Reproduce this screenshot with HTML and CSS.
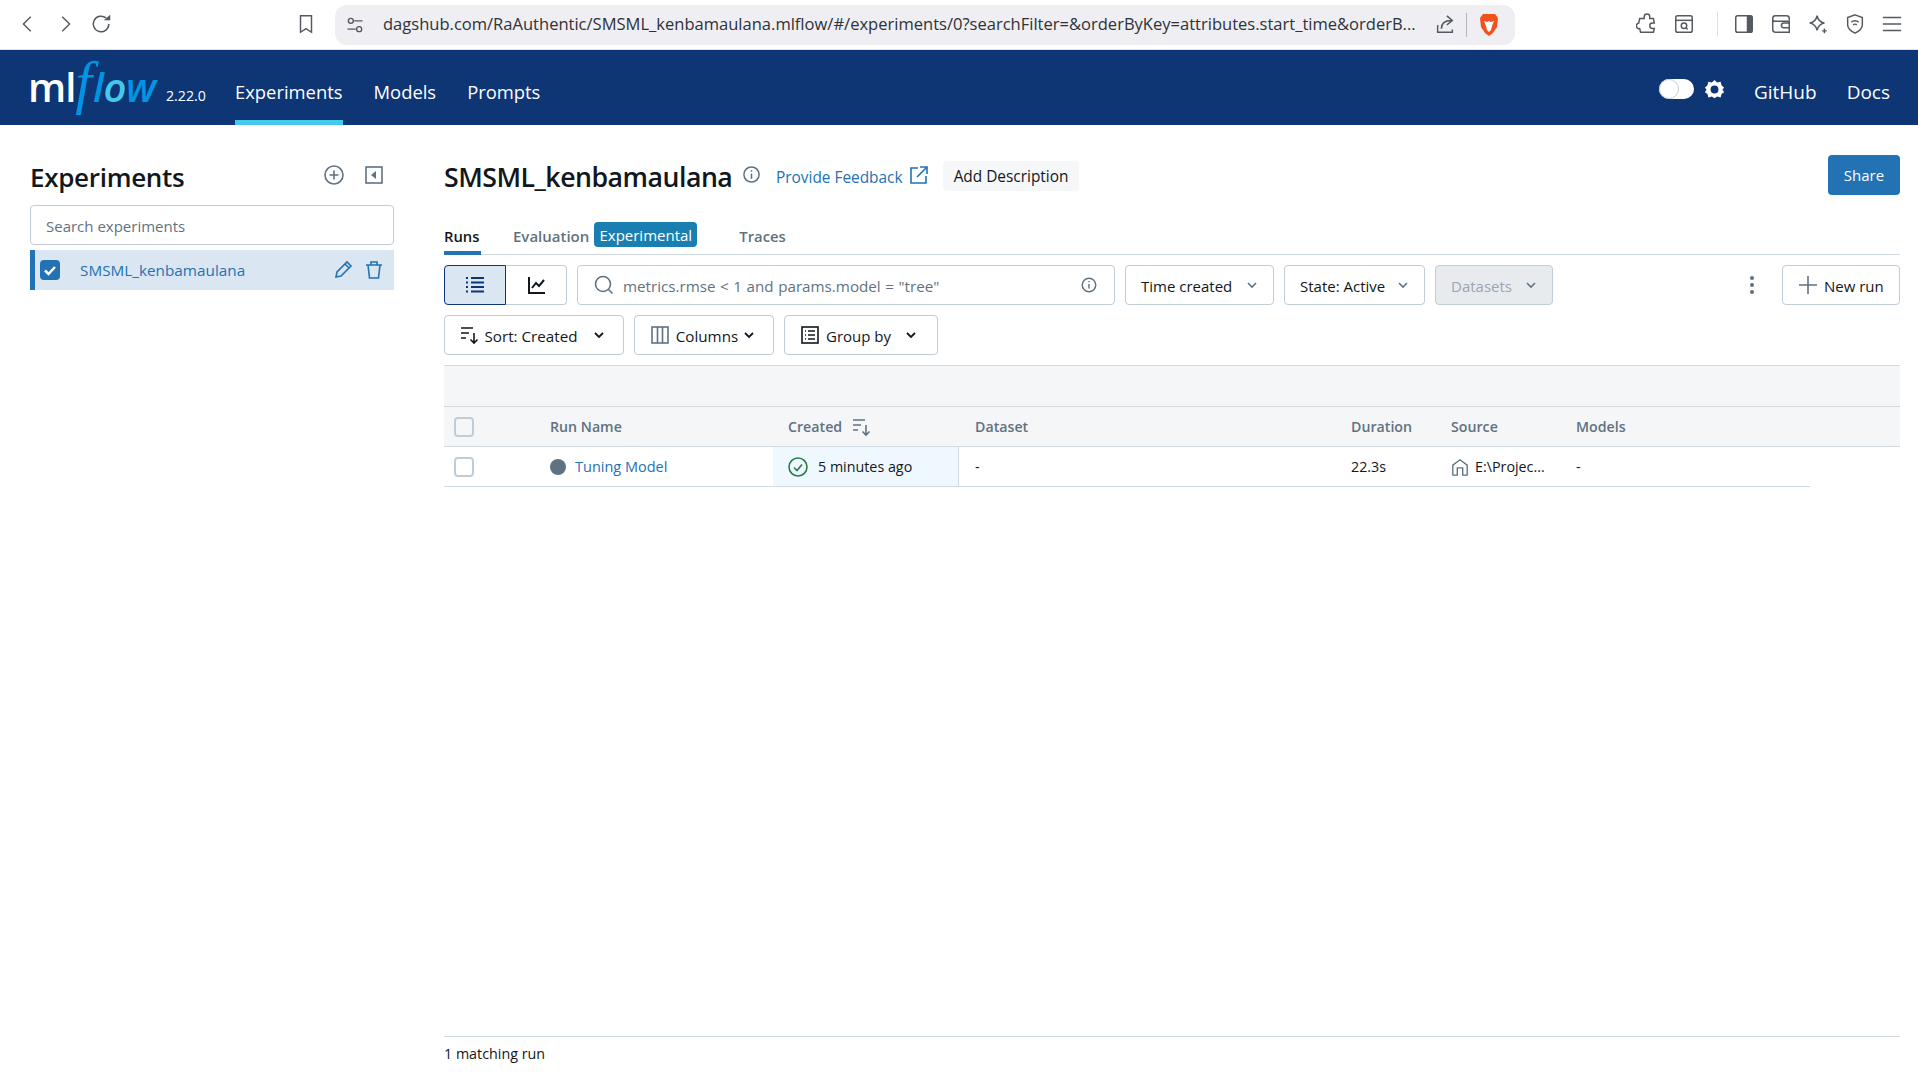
FILE: index.html
```html
<!DOCTYPE html>
<html lang="en">
<head>
  <meta charset="UTF-8" />
  <title>MLflow Experiments</title>
  <link rel="stylesheet" href="styles.css">
</head>
<body>

<div class="browser-bar">
  <div class="browser-nav">
    <svg class="b-icon" viewBox="0 0 24 24"><path d="M15 4l-8 8 8 8"/></svg>
    <svg class="b-icon" viewBox="0 0 24 24"><path d="M9 4l8 8-8 8"/></svg>
    <svg class="b-icon" viewBox="0 0 24 24"><path d="M19.5 12a8.5 8.5 0 1 1-3-6.5"/><path class="solid" d="M14 8h7V2z"/></svg>
  </div>
  <svg class="b-icon bookmark" viewBox="0 0 24 24"><path d="M6 3h12v18l-6-4-6 4z"/></svg>
  <div class="address">
    <svg class="b-icon tune" viewBox="0 0 24 24"><circle cx="7" cy="7" r="3"/><path d="M11 7h10M3 17h10"/><circle cx="17" cy="17" r="3"/></svg>
    <span class="url">dagshub.com/RaAuthentic/SMSML_kenbamaulana.mlflow/#/experiments/0?searchFilter=&amp;orderByKey=attributes.start_time&amp;orderB...</span>
    <svg class="b-icon share-ic" viewBox="0 0 24 24"><path d="M4 12v8h16v-3M8 16c0-6 4-9 11-9M14 2l6 5-6 5"/></svg>
    <span class="b-sep"></span>
    <svg class="brave" viewBox="0 0 24 24"><path d="M6 1h12l3 4-1 9-4 6-4 3-4-3-4-6-1-9z" fill="#f1511b"/><path d="M7 8l3 1 2-1 2 1 3-1-2 5-1 4-2 2-2-2-1-4z" fill="#fff"/></svg>
  </div>
  <div class="ext-icons">
    <svg class="b-icon" viewBox="0 0 24 24"><path d="M9 4a3 3 0 0 1 6 0v2h4l1 5h-2a3 3 0 0 0 0 6h2l-1 4H5l-1-4a3 3 0 0 1-1-6l1-5h5z"/></svg>
    <svg class="b-icon" viewBox="0 0 24 24"><rect x="3" y="3" width="18" height="18" rx="2"/><path d="M3 8h18"/><circle cx="12" cy="14" r="3"/><path d="M14 16l2 2"/></svg>
    <span class="b-sep light"></span>
    <svg class="b-icon" viewBox="0 0 24 24"><rect x="3" y="3" width="18" height="18" rx="2"/><path class="solid" d="M15 3h6v18h-6z"/></svg>
    <svg class="b-icon" viewBox="0 0 24 24"><path d="M21 8V6a3 3 0 0 0-3-3H6a3 3 0 0 0-3 3v12a3 3 0 0 0 3 3h15v-5M3 7c0 1 1 2 3 2h15v3"/><path d="M21 11h-6a2 2 0 0 0 0 5h6z"/></svg>
    <svg class="b-icon" viewBox="0 0 24 24"><path d="M11 3c1 5 3 7 8 8-5 1-7 3-8 8-1-5-3-7-8-8 5-1 7-3 8-8z"/><path d="M19 17v5M16.5 19.500h5"/></svg>
    <svg class="b-icon" viewBox="0 0 24 24"><path d="M12 2l8 3v8c0 4-4 7-8 9-4-2-8-5-8-9V5z"/><path d="M8 10c2-2 6-2 8 0M10 13c1-1 3-1 4 0"/></svg>
    <svg class="b-icon" viewBox="0 0 24 24"><path d="M2 5h20M2 12h20M2 19h20"/></svg>
  </div>
</div>

<header class="topnav">
  <div class="logo"><span class="logo-ml">ml</span><span class="logo-f">f</span><span class="logo-flow">l<span class="logo-o">o</span>w</span></div>
  <span class="version">2.22.0</span>
  <nav class="nav-links">
    <a class="active">Experiments</a>
    <a>Models</a>
    <a>Prompts</a>
  </nav>
  <div class="nav-right">
    <span class="toggle"><span class="knob"></span></span>
    <svg class="gear" viewBox="0 0 24 24"><path d="M12 1l3 3 4-1 1 4 3 3-2 2 2 3-3 2-1 4-4-1-3 2-3-2-4 1-1-4-3-2 2-3-2-2 3-3 1-4 4 1z" fill="#fff"/><circle cx="12" cy="12" r="4.500" fill="#0e3574"/></svg>
    <a class="github">GitHub</a>
    <a class="docs">Docs</a>
  </div>
</header>

<div class="page">
  <aside class="sidebar">
    <div class="side-head">
      <h2>Experiments</h2>
      <svg class="ic side-ic" viewBox="0 0 20 20"><circle cx="10" cy="10" r="9"/><path d="M10 5.500v9M5.500 10h9"/></svg>
      <svg class="ic side-ic" viewBox="0 0 20 20"><rect x="2" y="2" width="16" height="16"/><path class="solid" d="M12 6v8l-5-4z"/></svg>
    </div>
    <div class="side-search">Search experiments</div>
    <div class="exp-row">
      <span class="check-on"><svg viewBox="0 0 20 20"><path d="M5 10.500l3.500 3.500L15 7"/></svg></span>
      <span class="exp-name">SMSML_kenbamaulana</span>
      <svg class="ic blue-ic" viewBox="0 0 20 20"><path d="M3 17l1-5L14 2l4 4L8 16zM12 4l4 4"/></svg>
      <svg class="ic blue-ic" viewBox="0 0 20 20"><path d="M2 5h16M7 5V2h6v3M4 5l1.500 13h9L16 5"/></svg>
    </div>
  </aside>

  <main class="main">
    <div class="title-row">
      <h1>SMSML_kenbamaulana</h1>
      <svg class="ic info" viewBox="0 0 20 20"><circle cx="10" cy="10" r="8"/><path d="M10 9v5.500M10 5.500v1.500"/></svg>
      <a class="feedback">Provide Feedback</a>
      <svg class="ic ext-link" viewBox="0 0 20 20"><path d="M9 3H2v15h15v-7M11 2h7v7M18 2L8 12"/></svg>
      <button class="add-desc">Add Description</button>
      <button class="share">Share</button>
    </div>

    <div class="tabs">
      <span class="tab active">Runs</span>
      <span class="tab eval">Evaluation</span>
      <span class="badge">Experimental</span>
      <span class="tab traces">Traces</span>
    </div>

    <div class="toolbar">
      <div class="segmented">
        <span class="seg on">
          <svg class="ic dark-ic" viewBox="0 0 22 20"><path d="M2 3h2M7 3h13M2 7.500h2M7 7.500h13M2 12h2M7 12h13M2 16.500h2M7 16.500h13"/></svg>
        </span>
        <span class="seg">
          <svg class="ic dark-ic" viewBox="0 0 20 20"><path d="M2 2v16h16M5 13l4-5 3 3 5-6"/></svg>
        </span>
      </div>
      <div class="search-box">
        <svg class="ic grey-ic" viewBox="0 0 20 20"><circle cx="9" cy="9" r="7.500"/><path d="M14.500 14.500l4 4"/></svg>
        <span class="placeholder">metrics.rmse &lt; 1 and params.model = "tree"</span>
        <svg class="ic grey-ic info-sm" viewBox="0 0 20 20"><circle cx="10" cy="10" r="7.500"/><path d="M10 9v5M10 5.500v1.500"/></svg>
      </div>
      <button class="btn w-time"><span>Time created</span> <svg class="chev" viewBox="0 0 12 12"><path d="M2 4l4 4 4-4"/></svg></button>
      <button class="btn w-state"><span>State: Active</span> <svg class="chev" viewBox="0 0 12 12"><path d="M2 4l4 4 4-4"/></svg></button>
      <button class="btn w-data disabled"><span>Datasets</span> <svg class="chev" viewBox="0 0 12 12"><path d="M2 4l4 4 4-4"/></svg></button>
      <svg class="kebab" viewBox="0 0 4 20"><circle cx="2" cy="3" r="2"/><circle cx="2" cy="10" r="2"/><circle cx="2" cy="17" r="2"/></svg>
      <button class="btn w-new"><svg class="ic plus" viewBox="0 0 20 20"><path d="M10 1v18M1 10h18"/></svg><span>New run</span></button>
    </div>

    <div class="toolbar second">
      <button class="btn w-sort">
        <svg class="ic dark-ic" viewBox="0 0 20 20"><path d="M1 3h12M1 8h8M1 13h5M14 8v10M10.500 14.500l3.500 3.500 3.500-3.500"/></svg>
        <span>Sort: Created</span>
        <svg class="chev dark" viewBox="0 0 12 12"><path d="M2 4l4 4 4-4"/></svg>
      </button>
      <button class="btn w-cols">
        <svg class="ic grey-ic" viewBox="0 0 20 20"><rect x="2" y="2" width="16" height="16"/><path d="M7.500 2v16M12.500 2v16"/></svg>
        <span>Columns</span>
        <svg class="chev dark" viewBox="0 0 12 12"><path d="M2 4l4 4 4-4"/></svg>
      </button>
      <button class="btn w-group">
        <svg class="ic dark-ic" viewBox="0 0 20 20"><rect x="2" y="2" width="16" height="16"/><path d="M5 6h1M8 6h7M5 10h1M8 10h7M5 14h1M8 14h7"/></svg>
        <span>Group by</span>
        <svg class="chev dark" viewBox="0 0 12 12"><path d="M2 4l4 4 4-4"/></svg>
      </button>
    </div>

    <div class="band"></div>

    <div class="grid-row head">
      <span class="cell"><span class="checkbox"></span></span>
      <span class="cell">Run Name</span>
      <span class="cell">Created
        <svg class="ic sort-ic" viewBox="0 0 20 20"><path d="M1 3h12M1 8h8M1 13h5M14 8v10M10.500 14.500l3.500 3.500 3.500-3.500"/></svg>
      </span>
      <span class="cell">Dataset</span>
      <span class="cell">Duration</span>
      <span class="cell">Source</span>
      <span class="cell">Models</span>
    </div>
    <div class="grid-row run">
      <span class="cell"><span class="checkbox white"></span></span>
      <span class="cell"><span class="dot"></span><a class="run-link">Tuning Model</a></span>
      <span class="cell created">
        <svg class="ic ok" viewBox="0 0 20 20"><circle cx="10" cy="10" r="9"/><path d="M6 10.500l3 3 5-6"/></svg>
        5 minutes ago
      </span>
      <span class="cell">-</span>
      <span class="cell">22.3s</span>
      <span class="cell source">
        <svg class="ic grey-ic home" viewBox="0 0 20 20"><path d="M2 19V8l8-6 8 6v11h-5v-8H7v8z"/></svg>
        E:\Projec...
      </span>
      <span class="cell">-</span>
    </div>

    <div class="matching">1 matching run</div>
  </main>
</div>

</body>
</html>
```

FILE: styles.css
```css
* {
  box-sizing: border-box;
}
html, body {
  height: 100%;
}
body {
  margin: 0;
  font-family: "Open Sans", "Noto Sans", sans-serif;
  font-size: 15px;
  color: #11171c;
  background: white;
  display: flex;
  flex-direction: column;
  overflow: hidden;
}
button {
  font: inherit;
  color: inherit;
}
svg {
  flex: none;
}

/* browser chrome */
.browser-bar {
  height: 50px;
  border-bottom: 1px solid #dfe1e5;
  display: flex;
  align-items: center;
  padding-bottom: 1px;
  flex: none;
}
.b-icon {
  width: 22px;
  height: 22px;
  fill: none;
  stroke: #555a60;
  stroke-width: 1.6;
}
.b-icon .solid {
  fill: #555a60;
  stroke: none;
}
.browser-nav {
  display: flex;
  gap: 15px;
  margin-left: 17px;
}
.bookmark {
  margin-left: 182px;
  margin-right: 18px;
}
.address {
  width: 1180px;
  height: 40px;
  background: #eeeef3;
  border-radius: 12px;
  display: flex;
  align-items: center;
  padding-left: 10px;
  margin-top: 1px;
}
.tune {
  width: 20px;
  height: 20px;
}
.url {
  font-size: 16.55px;
  color: #2f3338;
  margin-left: 18px;
  padding-bottom: 2px;
  width: 1038px;
  white-space: nowrap;
  overflow: hidden;
}
.share-ic {
  margin-left: 13px;
}
.b-sep {
  width: 1px;
  height: 24px;
  background: #b4b6bb;
  margin: 0 10px 0 10px;
}
.b-sep.light {
  background: #dfe1e5;
  margin: 0 0 0 7px;
}
.brave {
  width: 24px;
  height: 24px;
}
.ext-icons {
  display: flex;
  align-items: center;
  gap: 15px;
  margin-left: 121px;
}

/* mlflow header */
.topnav {
  height: 75px;
  background: #0e3574;
  color: white;
  display: flex;
  align-items: stretch;
  flex: none;
  font-size: 18.4px;
}
.logo {
  margin-left: 28px;
  width: 138px;
  display: flex;
  align-items: center;
  height: 75px;
  white-space: nowrap;
  padding-bottom: 2px;
}
.logo-ml {
  font-size: 40px;
  font-weight: 600;
  letter-spacing: -1px;
}
.logo-f {
  font-family: "Liberation Serif", serif;
  font-style: italic;
  font-size: 60px;
  color: #0194e2;
  margin: 0 1px 9px 0;
}
.logo-flow {
  font-size: 40px;
  font-style: italic;
  font-weight: 600;
  color: #0194e2;
  letter-spacing: -0.5px;
}
.logo-o {
  color: #43c9ed;
}
.version {
  font-size: 14.2px;
  align-self: center;
  margin-top: 16px;
  width: 69px;
}
.nav-links {
  display: flex;
  gap: 31px;
}
.nav-links a {
  display: flex;
  align-items: center;
  padding-top: 12px;
  border-bottom: 5px solid transparent;
}
.nav-links a.active {
  border-bottom-color: #43c9ed;
}
.nav-right {
  margin-left: auto;
  margin-right: 28px;
  display: flex;
  align-items: center;
  padding-top: 3px;
}
.github, .docs {
  padding-top: 5px;
  font-size: 19px;
}
.toggle {
  width: 35px;
  height: 20px;
  border-radius: 10px;
  background: white;
  position: relative;
}
.knob {
  position: absolute;
  left: 0;
  top: 0;
  width: 20px;
  height: 20px;
  border-radius: 50%;
  border: 1px solid #c0cdd8;
  background: white;
}
.gear {
  width: 21px;
  height: 21px;
  margin: 0 29px 0 10px;
}
.github {
  margin-right: 30px;
}

/* page */
.page {
  flex: 1;
  display: flex;
  min-height: 0;
}
.ic {
  fill: none;
  stroke: currentColor;
  stroke-width: 1.6;
  width: 20px;
  height: 20px;
}
.ic .solid {
  fill: currentColor;
  stroke: none;
}
.sidebar {
  width: 364px;
  margin-left: 30px;
  padding-top: 30px;
  flex: none;
}
.side-head {
  height: 44px;
  display: flex;
  align-items: center;
  margin-bottom: 6px;
}
.side-head h2 {
  margin: 0;
  font-size: 26px;
  font-weight: 600;
  flex: 1;
  letter-spacing: -0.3px;
}
.side-ic {
  color: #5f7281;
  margin-right: 20px;
  margin-bottom: 5px;
}
.side-ic:last-child {
  margin-right: 10px;
}
.side-search {
  height: 40px;
  border: 1px solid #c0cdd8;
  border-radius: 4px;
  display: flex;
  align-items: center;
  padding: 1px 0 0 15px;
  color: #5f7281;
  margin-bottom: 5px;
}
.exp-row {
  height: 40px;
  background: #dae6f2;
  border-left: 5px solid #2272b4;
  display: flex;
  align-items: center;
  padding-left: 5px;
  color: #2272b4;
  gap: 11px;
  padding-right: 10px;
}
.check-on {
  width: 20px;
  height: 20px;
  border-radius: 4px;
  background: #2272b4;
  display: flex;
}
.check-on svg {
  fill: none;
  stroke: white;
  stroke-width: 2.5;
}
.exp-name {
  flex: 1;
  margin-left: 9px;
  font-size: 15.3px;
}
.blue-ic {
  color: #2272b4;
}
.main {
  width: 1456px;
  margin-left: 50px;
  padding-top: 30px;
  flex: none;
  display: flex;
  flex-direction: column;
}
.title-row {
  height: 40px;
  display: flex;
  align-items: center;
  flex: none;
}
.title-row h1 {
  margin: 0;
  padding-top: 2px;
  font-size: 26.7px;
  font-weight: 600;
  letter-spacing: -0.5px;
  width: 298px;
  white-space: nowrap;
}
.info {
  color: #5f7281;
  width: 19px;
  height: 19px;
  margin-bottom: 1px;
}
.feedback {
  color: #2272b4;
  margin-left: 15px;
  padding-top: 4px;
  font-size: 15.4px;
  width: 133px;
  white-space: nowrap;
}
.ext-link {
  color: #2272b4;
}
.add-desc {
  margin-left: 14px;
  margin-top: 2px;
  width: 136px;
  height: 30px;
  border: none;
  border-radius: 4px;
  background: #f5f7f9;
  padding: 1px 0 0;
  font-size: 15.4px;
}
.share {
  margin-left: auto;
  width: 72px;
  height: 40px;
  border: none;
  border-radius: 4px;
  background: #2272b4;
  color: white;
  padding: 0;
}
.tabs {
  height: 60px;
  border-bottom: 1px solid #d1d9e1;
  display: flex;
  align-items: flex-end;
  flex: none;
  position: relative;
}
.tab {
  height: 28px;
  color: #5f7281;
  font-weight: 600;
  font-size: 14.8px;
}
.tab.active {
  color: #11171c;
  width: 37px;
  border-bottom: 4px solid #2272b4;
  margin-bottom: -1px;
  white-space: nowrap;
  height: 29px;
}
.tab.eval {
  margin-left: 32px;
  font-size: 15px;
}
.badge {
  background: #1a7fb0;
  color: white;
  height: 25px;
  width: 103px;
  border-radius: 4px;
  margin: 0 0 7px 5px;
  padding-top: 1px;
  display: flex;
  align-items: center;
  justify-content: center;
  font-size: 15px;
}
.tab.traces {
  margin-left: 42px;
}
.toolbar {
  display: flex;
  margin-top: 10px;
  height: 40px;
  flex: none;
  align-items: center;
}
.segmented {
  display: flex;
  width: 123px;
  height: 40px;
  margin-right: 10px;
}
.seg {
  flex: 1;
  border: 1px solid #c0cdd8;
  border-left: none;
  border-radius: 0 4px 4px 0;
  display: flex;
  align-items: center;
  justify-content: center;
}
.seg.on {
  flex: none;
  width: 62px;
  background: #dae6f2;
  border: 1px solid #0e3574;
  border-radius: 4px 0 0 4px;
}
.dark-ic {
  color: #11171c;
}
.seg .dark-ic {
  color: #0e3574;
  stroke-width: 2;
  width: 22px;
}
.seg:last-child .dark-ic {
  color: #11171c;
  width: 20px;
  margin-left: 1px;
}
.grey-ic {
  color: #5f7281;
}
.search-box {
  width: 538px;
  height: 40px;
  border: 1px solid #c0cdd8;
  border-radius: 4px;
  display: flex;
  align-items: center;
  padding: 0 16px;
  margin-right: 10px;
}
.placeholder {
  flex: 1;
  color: #5f7281;
  margin-left: 9px;
  padding-top: 1px;
  word-spacing: 0.6px;
  font-size: 15.2px;
}
.info-sm {
  width: 18px;
  height: 18px;
}
.btn {
  height: 40px;
  border: 1px solid #c0cdd8;
  border-radius: 4px;
  background: white;
  display: flex;
  align-items: center;
  justify-content: space-between;
  padding: 0 15px;
  margin-right: 10px;
  white-space: nowrap;
  flex: none;
}
.btn span {
  padding-top: 1px;
}
.chev {
  width: 12px;
  height: 12px;
  fill: none;
  stroke: #5f7281;
  stroke-width: 1.6;
}
.chev.dark {
  stroke: #11171c;
  stroke-width: 1.8;
}
.w-time {
  width: 149px;
}
.w-state {
  width: 141px;
}
.w-data {
  width: 118px;
}
.disabled {
  background: #e8ebee;
  color: #9aa6b2;
}
.kebab {
  width: 4px;
  height: 20px;
  fill: #5f7281;
  margin-left: auto;
  margin-right: 28px;
}
.w-new {
  width: 118px;
  margin-right: 0;
  padding: 0 15px;
  justify-content: flex-start;
}
.w-new span {
  margin-left: 2px;
}
.plus {
  color: #5f7281;
  margin-right: 4px;
}
.w-sort {
  width: 180px;
  padding-right: 18px;
}
.w-sort span {
  margin-left: -11px;
  font-size: 15.2px;
}
.w-cols {
  width: 140px;
  padding-right: 18px;
}
.w-cols span {
  margin-left: 1px;
  font-size: 15.2px;
}
.w-group {
  width: 154px;
  padding-right: 20px;
}
.w-group span {
  margin-left: -8px;
}
.band {
  margin-top: 10px;
  height: 42px;
  background: #f5f6f8;
  border-top: 1px solid #d1d9e1;
  border-bottom: 1px solid #d1d9e1;
  flex: none;
}
.grid-row {
  display: grid;
  grid-template-columns: 94px 235px 186px 380px 100px 125px 1fr;
  height: 40px;
  flex: none;
  font-size: 14.3px;
  border-bottom: 1px solid #d1d9e1;
}
.grid-row.head {
  background: #f5f6f8;
  color: #5f7281;
  font-weight: 600;
  font-size: 14.2px;
}
.grid-row.run {
  width: 1366px;
}
.cell {
  display: flex;
  align-items: center;
  padding-left: 12px;
  white-space: nowrap;
  overflow: hidden;
}
.grid-row .cell:nth-child(3) {
  padding-left: 15px;
}
.grid-row .cell:nth-child(4) {
  padding-left: 16px;
}
.checkbox {
  width: 20px;
  height: 20px;
  border: 2px solid #c0cdd8;
  border-radius: 4px;
  margin-left: -2px;
  background: #f5f6f8;
}
.checkbox.white {
  background: white;
}
.sort-ic {
  color: #5f7281;
  margin-left: 10px;
}
.dot {
  width: 16px;
  height: 16px;
  border-radius: 50%;
  background: #5f7281;
  margin-right: 9px;
}
.run-link {
  color: #2272b4;
  font-size: 14.5px;
}
.grid-row .created {
  background: #f0f8ff;
  border-right: 1px solid #d1d9e1;
  gap: 10px;
}
.ok {
  color: #277c43;
}
.source {
  gap: 6px;
}
.home {
  width: 18px;
  height: 18px;
  stroke-width: 1.5;
}
.matching {
  margin-top: auto;
  height: 47px;
  border-top: 1px solid #d1d9e1;
  padding-top: 7px;
  font-size: 14.3px;
  flex: none;
}
```
